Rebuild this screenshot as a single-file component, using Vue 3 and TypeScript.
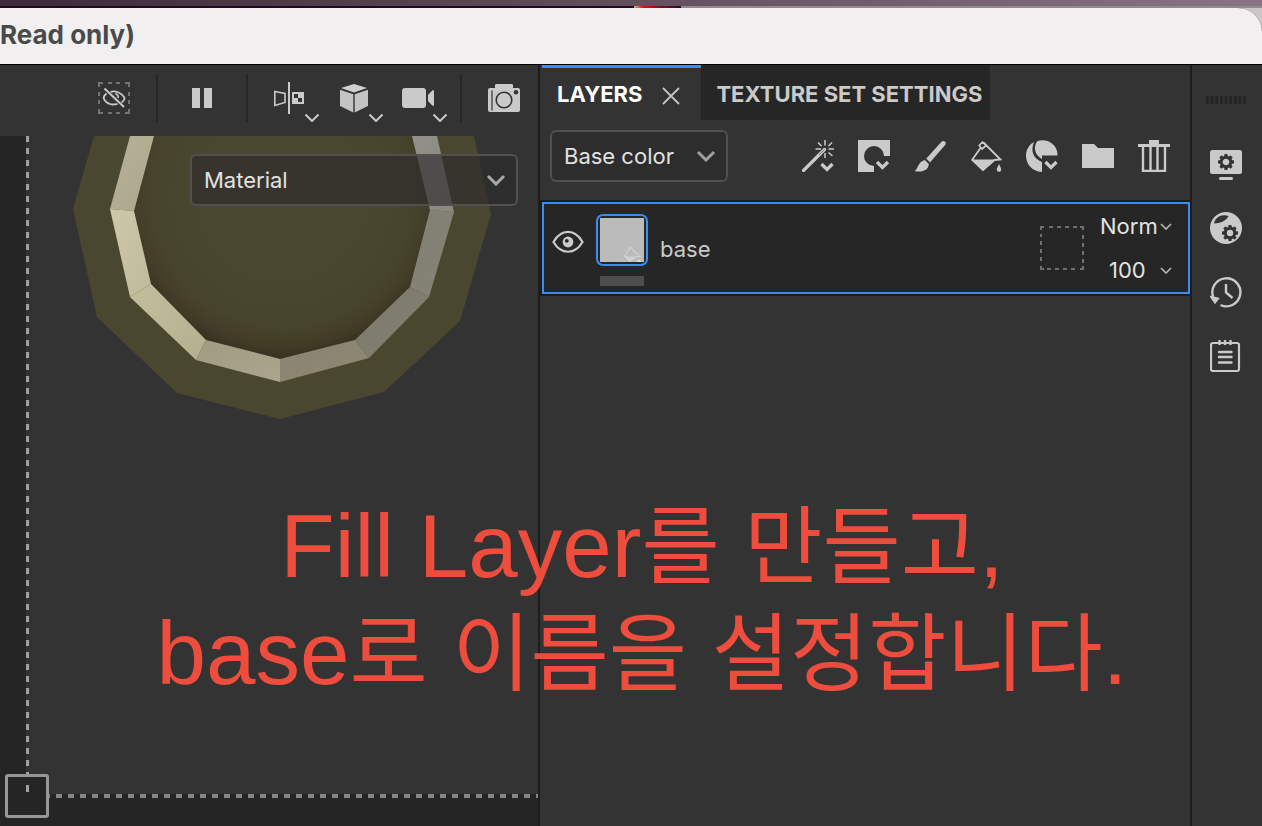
<script setup lang="ts">
import { ref } from 'vue'

interface Facet {
  points: string
  from: string
  to: string
}

const channel = ref('Base color')
const viewMode = ref('Material')
const blend = ref('Norm')
const opacity = ref('100')
const layerName = ref('base')

const facets: Facet[] = [
  { points: '130,0 154,0 134,75 110,73', from: '#b7b199', to: '#aca68c' },
  { points: '110,73 134,75 151,148 130,161', from: '#cdc8a9', to: '#bfba9b' },
  { points: '130,161 151,148 206,204 196,224', from: '#c3be9c', to: '#b4af8f' },
  { points: '196,224 206,204 280,223 280,246', from: '#a09b80', to: '#aaa58c' },
  { points: '280,223 355,204 369,222 280,246', from: '#898471', to: '#8e8873' },
  { points: '355,204 410,151 429,161 369,222', from: '#79776a', to: '#858370' },
  { points: '410,151 430,74 454,76 429,161', from: '#828073', to: '#858376' },
  { points: '412,0 437,0 454,76 430,74', from: '#929187', to: '#8a897e' },
]

const gearTeeth = [0, 45, 90, 135, 180, 225, 270, 315]
</script>

<template>
  <div class="desktop">
    <div class="wallpaper"><span class="glow"></span></div>
    <div class="window">
      <header class="titlebar">
        <h1>Read only)</h1>
      </header>

      <main class="workspace">
        <section class="viewport" aria-label="Viewport">
          <div class="toolbar">
            <button class="tool w84" type="button" aria-label="Hide selection">
              <svg width="32" height="32" viewBox="0 0 32 32" fill="none">
                <path d="M1 5V1h4M10 1h4M18 1h4M27 1h4v4M31 10v4M31 18v4M31 27v4h-4M22 31h-4M14 31h-4M5 31H1v-4M1 22v-4M1 14v-4" stroke="#747474" stroke-width="2" />
                <path d="M8.500 11.500C5.500 14 5 16 6.500 18C9.500 22 14 23.500 19.500 21.800M12.500 9.800C18 8.500 24 11 26.300 15.500C27 17 25.500 19 23.500 20.500" stroke="#c8c8c8" stroke-width="1.800" />
                <path d="M17.500 11.500C19.500 12.500 20.500 14 20.300 16" stroke="#c8c8c8" stroke-width="1.500" />
                <path d="M6.500 6.500L26 25" stroke="#c8c8c8" stroke-width="2" />
              </svg>
            </button>
            <span class="sep"></span>
            <button class="tool w88" type="button" aria-label="Pause">
              <svg width="20" height="20" viewBox="0 0 20 20"><path d="M0 0h8v20H0zM12 0h8v20h-8z" fill="#cacaca" /></svg>
            </button>
            <span class="sep"></span>
            <div class="menus">
              <button class="tool w64" type="button" aria-label="Symmetry">
                <svg width="64" height="48" viewBox="0 0 64 48" fill="none">
                  <path d="M18.800 17.500L29 19.500V28.500L18.800 31.500Z" stroke="#cacaca" stroke-width="1.600" />
                  <path d="M33 8v32" stroke="#cacaca" stroke-width="2" />
                  <path d="M36 18h12v12H36z" fill="#cacaca" />
                  <path d="M38 20h4v4h-4zM42 24h4v4h-4z" fill="#333" />
                  <path d="M49.500 40.500L56 47L62.500 40.500" stroke="#cacaca" stroke-width="2" />
                </svg>
              </button>
              <button class="tool w64" type="button" aria-label="Geometry">
                <svg width="64" height="48" viewBox="0 0 64 48" fill="none">
                  <path d="M34 10L47 14L34 18.500L21 14Z" fill="#d0d0d0" />
                  <path d="M20 15.800L33.300 20.300V38.500L20 32ZM48 15.800L34.700 20.300V38.500L48 32Z" fill="#c4c4c4" />
                  <path d="M49.500 40.500L56 47L62.500 40.500" stroke="#cacaca" stroke-width="2" />
                </svg>
              </button>
              <button class="tool w64" type="button" aria-label="Camera">
                <svg width="64" height="48" viewBox="0 0 64 48" fill="none">
                  <rect x="18" y="14" width="24" height="20" rx="3" fill="#cacaca" />
                  <path d="M44 21L48.500 16.300H50V31.700H48.500L44 27Z" fill="#cacaca" />
                  <path d="M49.500 40.500L56 47L62.500 40.500" stroke="#cacaca" stroke-width="2" />
                </svg>
              </button>
            </div>
            <span class="sep"></span>
            <button class="tool w76" type="button" aria-label="Render">
              <svg width="76" height="48" viewBox="0 0 76 48" fill="none">
                <path d="M33 12V11Q33 10 34.500 10H49.500Q51 10 51 11V14H56Q58 14 58 16V36Q58 38 56 38H28Q26 38 26 36V16Q26 14 28 14H33Z" fill="#cacaca" />
                <path d="M30 16.500v20" stroke="#333" stroke-width="1.200" />
                <circle cx="42" cy="26" r="7.800" stroke="#333" stroke-width="1.600" />
                <circle cx="54" cy="18.300" r="2.200" fill="#333" />
              </svg>
            </button>
          </div>

          <div class="canvas">
            <div class="tile"></div>
            <span class="handle"></span>
            <svg class="mesh" width="538" height="300" viewBox="0 0 538 300">
              <defs>
                <radialGradient id="bowl" gradientUnits="userSpaceOnUse" cx="282" cy="60" r="163">
                  <stop offset="0.500" stop-color="#4a4730" />
                  <stop offset="0.800" stop-color="#47442d" />
                  <stop offset="0.930" stop-color="#403b26" />
                  <stop offset="1" stop-color="#363120" />
                </radialGradient>
                <linearGradient v-for="(f, i) in facets" :id="'facet' + i" :key="i" x1="0" y1="0" x2="1" y2="1">
                  <stop offset="0" :stop-color="f.from" />
                  <stop offset="1" :stop-color="f.to" />
                </linearGradient>
              </defs>
              <polygon points="94,0 73,73 97,181 177,257 280,283 384,256 460,185 491,78 474,0" fill="#4a4730" />
              <polygon points="154,0 134,75 151,148 206,204 280,223 355,204 410,151 430,74 412,0" fill="url(#bowl)" />
              <polygon v-for="(f, i) in facets" :key="i" :points="f.points" :fill="`url(#facet${i})`" />
            </svg>
            <label class="combo view">
              <select v-model="viewMode" aria-label="View mode"><option>Material</option></select>
              <svg width="20" height="12" viewBox="0 0 20 12" fill="none"><path d="M2 2L10 10L18 2" stroke="#a8a8a8" stroke-width="3" /></svg>
            </label>
          </div>
        </section>

        <section class="layers" aria-label="Layers">
          <nav class="tabs">
            <div class="tab active">
              <button class="tab-name" type="button">LAYERS</button>
              <button class="close" type="button" aria-label="Close tab">
                <svg width="18" height="18" viewBox="0 0 18 18"><path d="M1 1L17 17M17 1L1 17" stroke="#c4c4c4" stroke-width="1.800" /></svg>
              </button>
            </div>
            <div class="tab"><button class="tab-name" type="button">TEXTURE SET SETTINGS</button></div>
          </nav>

          <div class="actions">
            <label class="combo channel">
              <select v-model="channel" aria-label="Channel"><option>Base color</option></select>
              <svg width="20" height="12" viewBox="0 0 20 12" fill="none"><path d="M2 2L10 10L18 2" stroke="#a0a0a0" stroke-width="3" /></svg>
            </label>
            <div class="icons">
              <button type="button" aria-label="Add effect">
                <svg width="32" height="32" viewBox="0 0 32 32" fill="none" stroke="#cacaca">
                  <path d="M1.500 30.500L22.500 9.500" stroke-width="3.200" stroke-linecap="round" />
                  <path d="M17 15L22.500 9.500" stroke="#555" stroke-width="0.700" />
                  <path d="M23 0v5.500M16 2.500l3.500 3.500M13.500 9H19M26.500 9H32M30 2.500L26.500 6M23 13v5M26.500 12.500L30.500 16" stroke-width="1.500" />
                  <path d="M19.500 24L25 29.500L30.500 24" stroke-width="3.200" />
                </svg>
              </button>
              <button type="button" aria-label="Add mask">
                <svg width="32" height="32" viewBox="0 0 32 32" fill="none">
                  <path d="M0 0H32V16H26A10 10 0 1 0 16 26V32H0Z" fill="#cacaca" />
                  <path d="M19 22L24.500 27.500L30 22" stroke="#cacaca" stroke-width="3.200" />
                </svg>
              </button>
              <button type="button" aria-label="Add paint layer">
                <svg width="32" height="32" viewBox="0 0 32 32" fill="#cacaca">
                  <path d="M27.500 1.800C29.500 0 33 2 31.300 4.800L16 22.500L12.300 18.500Z" />
                  <path d="M10.800 20L14.800 24C14.500 31 7 32.500 0.500 31C4 29.500 3.500 22 10.800 20Z" />
                </svg>
              </button>
              <button type="button" aria-label="Add fill layer">
                <svg width="32" height="32" viewBox="0 0 32 32" fill="none" stroke="#cacaca">
                  <path d="M10.500 8L2.200 19.800L13 30L24.500 20L30.500 19.500L13.500 2.500" stroke-width="1.900" />
                  <path d="M12.500 2L16 5.500L12 9L9.200 5.500Z" fill="#333" stroke-width="1.700" stroke-linejoin="round" />
                  <path d="M2.500 20H24.500L13 30.500Z" fill="#cacaca" />
                  <path d="M29 24C27 28 26.500 29 27 30.500C27.700 32.300 30.500 32.300 31 30.500C31.500 29 31 28 29 24Z" fill="#cacaca" stroke="none" />
                </svg>
              </button>
              <button type="button" aria-label="Add smart material">
                <svg width="32" height="32" viewBox="0 0 32 32" fill="#cacaca">
                  <path d="M8 2C4 12 8 19 16 22V32C-2 31 -5 9 8 2Z" />
                  <path d="M11 1.500C20 -2.500 32 4 31.500 15.500H16V19C9 15 7 8 11 1.500Z" />
                  <path d="M19.500 22L25 27.500L30.500 22" fill="none" stroke="#cacaca" stroke-width="3.200" />
                </svg>
              </button>
              <button type="button" aria-label="Add folder">
                <svg width="32" height="32" viewBox="0 0 32 32"><path d="M0 4H12L16 8H32V28H0Z" fill="#cacaca" /></svg>
              </button>
              <button type="button" aria-label="Delete layer">
                <svg width="32" height="32" viewBox="0 0 32 32">
                  <path d="M11 0H21V4H32V7H0V4H11Z" fill="#cacaca" />
                  <path d="M5 7V31H27V7M12.500 7V31M19.500 7V31" fill="none" stroke="#cacaca" stroke-width="2.400" />
                </svg>
              </button>
            </div>
          </div>

          <div class="layer-row">
            <button class="eye" type="button" aria-label="Toggle visibility">
              <svg width="32" height="24" viewBox="0 0 32 24" fill="none">
                <path d="M1.500 12C9 -1.500 23 -1.500 30.500 12C23 25 9 25 1.500 12Z" stroke="#cacaca" stroke-width="2.200" />
                <circle cx="16" cy="12" r="5.400" fill="#cacaca" />
                <circle cx="14.800" cy="10.800" r="1.900" fill="#262626" />
              </svg>
            </button>
            <div class="thumbs">
              <button class="thumb" type="button" aria-label="Layer content">
                <svg width="44" height="44" viewBox="0 0 44 44" fill="none">
                  <path d="M0 0H44V44H0Z" fill="#bbb" />
                  <path d="M30 30L24.500 38L30 43.500L36 38.500H40L30 29" stroke="#d2d2d2" stroke-width="1.200" />
                  <path d="M25 38.500H36L30 44Z" fill="#d2d2d2" />
                  <path d="M37 44C37 41 41 41 41 44Z" fill="#e0e0e0" />
                </svg>
              </button>
              <span class="thumb-bar"></span>
            </div>
            <span class="layer-name">{{ layerName }}</span>
            <svg class="mask" width="44" height="44" viewBox="0 0 44 44">
              <path d="M4 1H1V4M9 1h4M17 1h4M25 1h4M33 1h4M40 1H43V4M43 9v4M43 17v4M43 25v4M43 33v4M43 40V43H40M35 43h-4M27 43h-4M19 43h-4M11 43h-4M4 43H1V40M1 35v-4M1 27v-4M1 19v-4M1 11v-3" fill="none" stroke="#6e6e6e" stroke-width="2" />
            </svg>
            <div class="props">
              <label>
                <select v-model="blend" aria-label="Blend mode"><option>Norm</option></select>
                <svg width="12" height="8" viewBox="0 0 12 8" fill="none"><path d="M1 2L6 7L11 2" stroke="#b8b8b8" stroke-width="1.600" /></svg>
              </label>
              <label>
                <select v-model="opacity" class="num" aria-label="Opacity"><option>100</option></select>
                <svg width="12" height="8" viewBox="0 0 12 8" fill="none"><path d="M1 2L6 7L11 2" stroke="#b8b8b8" stroke-width="1.600" /></svg>
              </label>
            </div>
          </div>
        </section>

        <aside class="rail" aria-label="Docked panels">
          <svg class="grip" width="40" height="8" viewBox="0 0 40 8"><path d="M0 4H40" stroke="#242424" stroke-width="8" stroke-dasharray="2.700 1.960" /></svg>
          <button type="button" aria-label="Display settings">
            <svg width="32" height="32" viewBox="0 0 32 32">
              <rect y="2" width="32" height="24" rx="2.500" fill="#cacaca" />
              <rect x="9" y="29" width="14" height="3" rx="1.500" fill="#cacaca" />
              <g transform="translate(16 14)">
                <rect v-for="a in gearTeeth" :key="a" x="-1.700" y="-8" width="3.400" height="5" rx="0.800" fill="#333" :transform="`rotate(${a})`" />
                <circle r="4.800" fill="#cacaca" stroke="#333" stroke-width="2.900" />
              </g>
            </svg>
          </button>
          <button type="button" aria-label="Shader settings">
            <svg width="32" height="32" viewBox="0 0 32 32">
              <circle cx="16" cy="16" r="16" fill="#cacaca" />
              <path d="M4 11.500C5 5 12 1.500 18.500 4C17 8.500 10 11.500 4 11.500Z" fill="#333" />
              <g transform="translate(20 21)">
                <rect v-for="a in gearTeeth" :key="a" x="-1.700" y="-8" width="3.400" height="5" rx="0.800" fill="#333" :transform="`rotate(${a})`" />
                <circle r="4.700" fill="#cacaca" stroke="#333" stroke-width="3" />
              </g>
            </svg>
          </button>
          <button type="button" aria-label="History">
            <svg width="32" height="32" viewBox="0 0 32 32" fill="none" stroke="#cacaca">
              <path d="M3.200 21A14 14 0 1 1 10.500 29" stroke-width="2.400" />
              <path d="M16 8V16.500L22.500 22" stroke-width="2.400" />
              <path d="M0.500 20.500L8.500 22.500L5 27Z" fill="#cacaca" stroke-width="1.400" />
            </svg>
          </button>
          <button type="button" aria-label="Log">
            <svg width="32" height="32" viewBox="0 0 32 32" fill="none" stroke="#cacaca">
              <rect x="1" y="3" width="28" height="28" rx="2" stroke-width="2.200" />
              <path d="M9.500 0V5M15 0V5M20.500 0V5" stroke-width="2.400" />
              <path d="M9 12H21.500M9 17H21.500M9 22.500H21.500" stroke-width="2.400" stroke-linecap="round" />
            </svg>
          </button>
        </aside>
      </main>
    </div>

    <p class="caption">
      Fill Layer<span>를</span> <span>만들고</span>,<br />base<span>로</span> <span>이름을</span> <span>설정합니다</span>.
    </p>
  </div>
</template>

<style>
body {
  margin: 0;
  background: #333;
}
</style>

<style scoped>
.desktop {
  position: relative;
  display: flex;
  flex-direction: column;
  min-height: 100vh;
  overflow: hidden;
  background: #c9c7c8;
  font-family: Inter, "Noto Sans CJK KR", sans-serif;
  font-size: 22px;
  color: #e2e2e2;
}
.wallpaper {
  display: flex;
  align-items: flex-end;
  height: 8px;
  background:
    linear-gradient(90deg, #21091f 54%, #8f8b8f 54%) bottom / 100% 2px no-repeat,
    linear-gradient(90deg, #3d2939, #8a7483);
}
.glow {
  width: 46px;
  height: 2px;
  margin-left: 50.2%;
  background: linear-gradient(90deg, #d9ac63, #d01a12 20%, #7d0a20 60%, #300830);
}
.window {
  display: flex;
  flex: 1;
  flex-direction: column;
  overflow: hidden;
  border-top-right-radius: 24px;
  background: #333;
}
.titlebar {
  display: flex;
  align-items: center;
  height: 56px;
  box-sizing: content-box;
  border-bottom: 1px solid #000;
  background: #f1eff0;
}
.titlebar h1 {
  margin: 0;
  padding-bottom: 2px;
  font-size: 26px;
  font-weight: 700;
  line-height: 32px;
  color: #4a4a4a;
}
.workspace {
  display: flex;
  flex: 1;
}
button {
  display: flex;
  align-items: center;
  justify-content: center;
  padding: 0;
  border: 0;
  background: none;
  font: inherit;
  color: inherit;
}
svg {
  display: block;
  flex: none;
}
select {
  width: 100%;
  padding: 0;
  border: 0;
  outline: 0;
  appearance: none;
  background: none;
  font: inherit;
  color: inherit;
}

.viewport {
  display: flex;
  flex: 538 1 0;
  flex-direction: column;
  min-width: 0;
  border-right: 2px solid #1c1c1c;
}
.toolbar {
  display: flex;
  align-items: center;
  justify-content: flex-end;
  height: 71px;
  box-sizing: border-box;
  padding-bottom: 5px;
}
.tool {
  height: 48px;
}
.w64 { width: 64px; }
.w76 { width: 76px; }
.w84 { width: 84px; }
.w88 { width: 88px; }
.sep {
  width: 2px;
  height: 48px;
  background: #262626;
}
.menus {
  display: flex;
  padding: 0 12px 0 8px;
}
.canvas {
  position: relative;
  flex: 1;
  padding: 0 0 28px 26px;
  overflow: hidden;
  background: #252525;
}
.tile {
  height: 100%;
  box-sizing: border-box;
  background:
    repeating-linear-gradient(180deg, #a0a0a0 0 6px, transparent 6px 12px) left / 3px 100% no-repeat,
    repeating-linear-gradient(90deg, #252525 0 6px, #868686 6px 12px) bottom / 100% 4px no-repeat,
    #333;
}
.handle {
  position: absolute;
  bottom: 8px;
  left: 5px;
  width: 38px;
  height: 38px;
  border: 3px solid #979797;
  border-radius: 3px;
  background: linear-gradient(#a0a0a0, #a0a0a0) 18px 8px / 3px 7px no-repeat #252525;
}
.mesh {
  position: absolute;
  top: 0;
  left: 0;
}
.combo {
  display: flex;
  align-items: center;
  height: 52px;
  box-sizing: border-box;
  padding: 0 10px 0 12px;
  border: 2px solid #505050;
  border-radius: 6px;
  background: #2d2d2d;
}
.view {
  position: absolute;
  top: 18px;
  right: 20px;
  width: 328px;
  background: rgba(44, 43, 44, 0.65);
}

.layers {
  flex: 650 1 0;
  min-width: 0;
  border-right: 2px solid #1c1c1c;
}
.tabs {
  display: flex;
  height: 55px;
  padding-left: 2px;
}
.tab {
  display: flex;
  align-items: center;
  gap: 20px;
  box-sizing: border-box;
  padding: 0 8px 0 15px;
  border-top: 3px solid #262626;
  background: #262626;
  color: #cacaca;
}
.tab.active {
  padding-right: 21px;
  border-color: #378ef0;
  background: #333;
  color: #fff;
}
.tab-name {
  font-size: 22px;
  font-weight: 700;
}
.close {
  padding-top: 4px;
}
.actions {
  display: flex;
  align-items: center;
  justify-content: space-between;
  height: 80px;
  box-sizing: border-box;
  padding: 0 20px 8px 10px;
}
.channel {
  width: 178px;
}
.icons {
  display: flex;
  gap: 24px;
}
.layer-row {
  display: flex;
  align-items: center;
  height: 92px;
  box-sizing: border-box;
  margin: 2px 0 0 2px;
  padding: 0 16px 0 8px;
  border: 2px solid #378ef0;
  outline: 2px solid #1c1c1c;
  background: #262626;
}
.eye {
  padding-bottom: 12px;
  margin-right: 12px;
}
.thumbs {
  display: flex;
  flex-direction: column;
  align-items: center;
  gap: 10px;
  padding-top: 4px;
}
.thumb {
  width: 52px;
  height: 52px;
  border: 2px solid #378ef0;
  border-radius: 7px;
}
.thumb-bar {
  width: 44px;
  height: 10px;
  background: #4d4d4d;
}
.layer-name {
  flex: 1;
  padding: 2px 0 0 12px;
  color: #cacaca;
}
.mask {
  margin-right: 16px;
}
.props {
  display: flex;
  flex-direction: column;
  gap: 16px;
  width: 72px;
}
.props label {
  display: flex;
  align-items: center;
  height: 28px;
}
.props .num {
  padding-left: 9px;
}

.rail {
  display: flex;
  flex: 0 0 70px;
  flex-direction: column;
  align-items: center;
  gap: 32px;
  box-sizing: border-box;
  padding: 31px 2px 0 0;
}
.grip {
  margin-bottom: 12px;
}

.caption {
  position: absolute;
  top: 493px;
  right: 0;
  left: 22px;
  margin: 0;
  font-family: "Liberation Sans", "Noto Sans CJK KR", sans-serif;
  font-size: 89px;
  line-height: 107px;
  text-align: center;
  white-space: nowrap;
  color: #ee4d3d;
  pointer-events: none;
}
.caption span {
  font-size: 85px;
  line-height: 1px;
}
</style>
